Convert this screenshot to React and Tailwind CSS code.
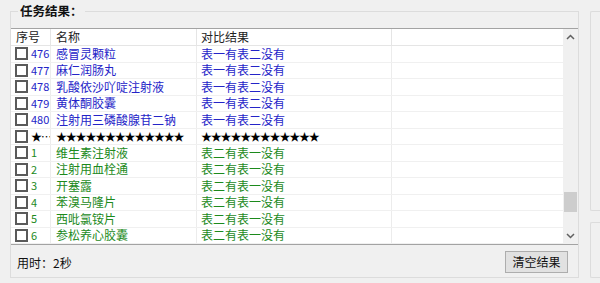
import React from "react";

const rows = [
  { no: "476", name: "感冒灵颗粒", res: "表一有表二没有", color: "text-[#2424c8]" },
  { no: "477", name: "麻仁润肠丸", res: "表一有表二没有", color: "text-[#2424c8]" },
  { no: "478", name: "乳酸依沙吖啶注射液", res: "表一有表二没有", color: "text-[#2424c8]" },
  { no: "479", name: "黄体酮胶囊", res: "表一有表二没有", color: "text-[#2424c8]" },
  { no: "480", name: "注射用三磷酸腺苷二钠", res: "表一有表二没有", color: "text-[#2424c8]" },
  { no: "★…", name: "★★★★★★★★★★★★★", res: "★★★★★★★★★★★★", color: "text-black", star: true },
  { no: "1", name: "维生素注射液", res: "表二有表一没有", color: "text-[#1c8a1c]" },
  { no: "2", name: "注射用血栓通", res: "表二有表一没有", color: "text-[#1c8a1c]" },
  { no: "3", name: "开塞露", res: "表二有表一没有", color: "text-[#1c8a1c]" },
  { no: "4", name: "苯溴马隆片", res: "表二有表一没有", color: "text-[#1c8a1c]" },
  { no: "5", name: "西吡氯铵片", res: "表二有表一没有", color: "text-[#1c8a1c]" },
  { no: "6", name: "参松养心胶囊", res: "表二有表一没有", color: "text-[#1c8a1c]" },
];

const font = { fontFamily: '"Noto Sans CJK SC", "DejaVu Sans", sans-serif' };

const Row = ({ row }) => (
  <div className={`flex h-[16.5px] shrink-0 items-center border-b border-[#f0f0f0] text-[12px] leading-none ${row.color}`}>
    {/* 序号 */}
    <div className="w-[40px] h-full flex items-center border-r border-[#ececec] pl-[4px] overflow-hidden whitespace-nowrap">
      <span className="w-[13px] h-[13px] border-2 border-[#5a5a5a] bg-white shrink-0 mr-[3px]" />
      <span className={row.star ? "text-[11px] tracking-[-1px]" : "text-[11px]"}>{row.no}</span>
    </div>
    {/* 名称 */}
    <div className="w-[146px] h-full flex items-center border-r border-[#ececec] pl-[5px] whitespace-nowrap overflow-hidden">
      <span className={row.star ? "text-[11px] tracking-[-1.2px]" : ""}>{row.name}</span>
    </div>
    {/* 对比结果 */}
    <div className="w-[195px] h-full flex items-center border-r border-[#ececec] pl-[4px] whitespace-nowrap overflow-hidden">
      <span className={row.star ? "text-[11px] tracking-[-1.2px]" : ""}>{row.res}</span>
    </div>
    <div className="flex-1 h-full" />
  </div>
);

const Chevron = ({ up }) => (
  <svg width="9" height="6" viewBox="0 0 9 6" className={up ? "" : "rotate-180"}>
    <path d="M1 5 L4.5 1.5 L8 5" fill="none" stroke="#606060" strokeWidth="1.5" />
  </svg>
);

export default function App() {
  return (
    <div className="w-[600px] h-[283px] bg-[#f0f0f0] flex overflow-hidden" style={font}>
      {/* 任务结果 group */}
      <div className="ml-[10px] mt-[11px] w-[569px] h-[267px] shrink-0 border border-[#dcdcdc] relative flex flex-col">
        <div className="absolute -top-[10px] left-[7px] bg-[#f0f0f0] px-[2px] text-[12.5px] font-bold text-[#111] leading-[18px]">
          任务结果：
        </div>

        {/* list */}
        <div className="mt-[16px] h-[217px] border-y border-[#a3a3a3] bg-white flex overflow-hidden">
          <div className="flex-1 flex flex-col overflow-hidden">
            {/* header */}
            <div className="flex h-[17px] shrink-0 items-center border-b border-[#e5e5e5] text-[12px] text-[#222] leading-none">
              <div className="w-[40px] h-full flex items-center border-r border-[#e5e5e5] pl-[5px]">序号</div>
              <div className="w-[146px] h-full flex items-center border-r border-[#e5e5e5] pl-[5px]">名称</div>
              <div className="w-[195px] h-full flex items-center border-r border-[#e5e5e5] pl-[4px]">对比结果</div>
              <div className="flex-1 h-full" />
            </div>
            {rows.map((r, i) => (
              <Row key={i} row={r} />
            ))}
          </div>
          {/* scrollbar */}
          <div className="w-[15px] shrink-0 bg-[#f0f0f0] flex flex-col items-center">
            <div className="h-[16px] flex items-center justify-center">
              <Chevron up />
            </div>
            <div className="flex-1 w-full flex flex-col pt-[147px]">
              <div className="h-[20px] mx-[1px] bg-[#cdcdcd]" />
            </div>
            <div className="h-[16px] flex items-center justify-center">
              <Chevron />
            </div>
          </div>
        </div>

        {/* footer */}
        <div className="flex-1 flex items-start justify-between pl-[6px] pr-[10px] pt-[6px]">
          <span className="text-[12px] text-[#111] mt-[3px]">用时：2秒</span>
          <button className="w-[63px] h-[22px] bg-[#e1e1e1] border border-[#adadad] text-[12px] text-[#111] leading-none">
            清空结果
          </button>
        </div>
      </div>

      {/* right side panels (cut off) */}
      <div className="ml-[11px] flex-1 flex flex-col">
        <div className="mt-[11px] h-[200px] border-l border-y border-[#dcdcdc] rounded-l-[2px]" />
        <div className="mt-[11px] h-[56px] border-l border-y border-[#dcdcdc] rounded-l-[2px]" />
      </div>
    </div>
  );
}
